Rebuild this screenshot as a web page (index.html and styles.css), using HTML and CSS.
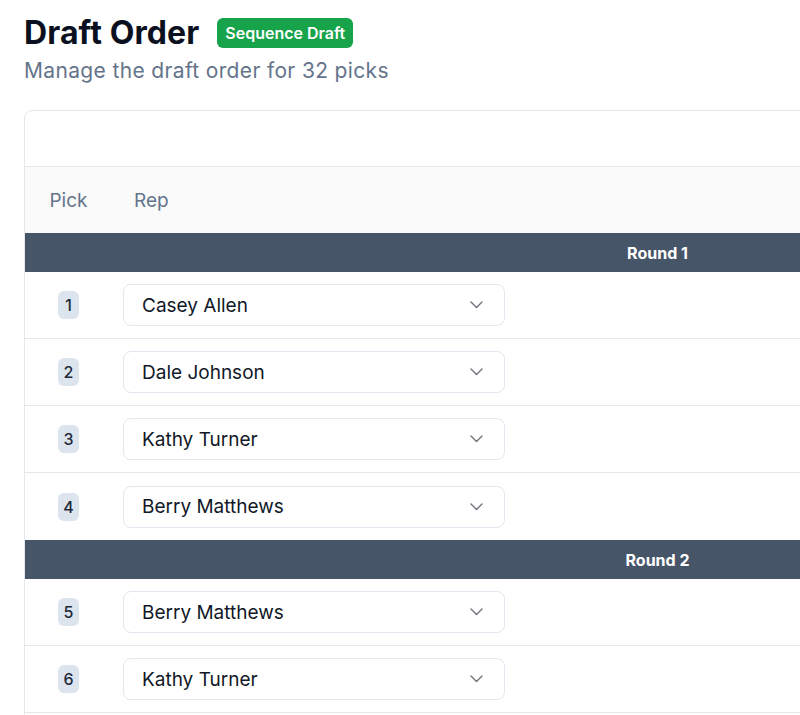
FILE: index.html
```html
<!DOCTYPE html>
<html lang="en">
<head>
<meta charset="utf-8">
<title>Draft Order</title>
<link rel="stylesheet" href="styles.css">
</head>
<body>
<div class="page">
  <header class="head">
    <div class="title-row">
      <h1 class="title">Draft Order</h1>
      <span class="badge">Sequence Draft</span>
    </div>
    <p class="subtitle">Manage the draft order for 32 picks</p>
  </header>

  <section class="card">
    <div class="toolbar"></div>
    <div class="thead">
      <div class="col-pick">Pick</div>
      <div class="col-rep">Rep</div>
    </div>

    <div class="round">Round 1</div>
    <div class="row">
      <div class="pick"><span class="num">1</span></div>
      <div class="rep"><div class="select"><span>Casey Allen</span><svg class="chev" width="13" height="8" viewBox="0 0 13 8"><path d="M1 1l5.5 5.5L12 1" fill="none" stroke="#71717a" stroke-width="1.4" stroke-linecap="round" stroke-linejoin="round"/></svg></div></div>
    </div>
    <div class="row">
      <div class="pick"><span class="num">2</span></div>
      <div class="rep"><div class="select"><span>Dale Johnson</span><svg class="chev" width="13" height="8" viewBox="0 0 13 8"><path d="M1 1l5.5 5.5L12 1" fill="none" stroke="#71717a" stroke-width="1.4" stroke-linecap="round" stroke-linejoin="round"/></svg></div></div>
    </div>
    <div class="row">
      <div class="pick"><span class="num">3</span></div>
      <div class="rep"><div class="select"><span>Kathy Turner</span><svg class="chev" width="13" height="8" viewBox="0 0 13 8"><path d="M1 1l5.5 5.5L12 1" fill="none" stroke="#71717a" stroke-width="1.4" stroke-linecap="round" stroke-linejoin="round"/></svg></div></div>
    </div>
    <div class="row last">
      <div class="pick"><span class="num">4</span></div>
      <div class="rep"><div class="select"><span>Berry Matthews</span><svg class="chev" width="13" height="8" viewBox="0 0 13 8"><path d="M1 1l5.5 5.5L12 1" fill="none" stroke="#71717a" stroke-width="1.4" stroke-linecap="round" stroke-linejoin="round"/></svg></div></div>
    </div>

    <div class="round">Round 2</div>
    <div class="row">
      <div class="pick"><span class="num">5</span></div>
      <div class="rep"><div class="select"><span>Berry Matthews</span><svg class="chev" width="13" height="8" viewBox="0 0 13 8"><path d="M1 1l5.5 5.5L12 1" fill="none" stroke="#71717a" stroke-width="1.4" stroke-linecap="round" stroke-linejoin="round"/></svg></div></div>
    </div>
    <div class="row">
      <div class="pick"><span class="num">6</span></div>
      <div class="rep"><div class="select"><span>Kathy Turner</span><svg class="chev" width="13" height="8" viewBox="0 0 13 8"><path d="M1 1l5.5 5.5L12 1" fill="none" stroke="#71717a" stroke-width="1.4" stroke-linecap="round" stroke-linejoin="round"/></svg></div></div>
    </div>
    <div class="row">
      <div class="pick"><span class="num">7</span></div>
      <div class="rep"><div class="select"><span>Dale Johnson</span><svg class="chev" width="13" height="8" viewBox="0 0 13 8"><path d="M1 1l5.5 5.5L12 1" fill="none" stroke="#71717a" stroke-width="1.4" stroke-linecap="round" stroke-linejoin="round"/></svg></div></div>
    </div>
  </section>
</div>
</body>
</html>
```

FILE: styles.css
```css
html, body {
  margin: 0;
  padding: 0;
  overflow: hidden;
  background: #ffffff;
}

body {
  font-family: Inter, "Noto Sans", "Liberation Sans", sans-serif;
  color: #111827;
}

.page {
  padding: 13px 0 0 24px;
  width: 1267px;
}

.title-row {
  display: flex;
  align-items: center;
  gap: 18px;
}

.title {
  margin: 0;
  font-size: 32px;
  line-height: 40px;
  font-weight: 700;
  color: #0b1020;
  letter-spacing: 0.1px;
}

.badge {
  display: inline-flex;
  align-items: center;
  height: 30px;
  padding: 0 8px;
  border-radius: 6px;
  background: #16a34a;
  color: #ffffff;
  font-size: 16px;
  font-weight: 600;
  margin-top: 0;
}

.subtitle {
  margin: 4px 0 0 0;
  font-size: 21px;
  line-height: 28px;
  letter-spacing: 0.35px;
  color: #64748b;
}

.card {
  margin-top: 25px;
  border: 1px solid #e5e7eb;
  border-radius: 8px;
  overflow: hidden;
}

.toolbar {
  height: 55px;
  border-bottom: 1px solid #e5e7eb;
}

.thead {
  display: flex;
  align-items: center;
  height: 66px;
  background: #fafafa;
  color: #64748b;
  font-size: 19px;
}

.col-pick {
  width: 87px;
  text-align: center;
}

.col-rep {
  padding-left: 22px;
}

.round {
  height: 39px;
  background: #475569;
  color: #ffffff;
  font-size: 16px;
  font-weight: 700;
  display: flex;
  align-items: center;
  justify-content: center;
}

.row {
  display: flex;
  align-items: center;
  height: 66px;
  border-bottom: 1px solid #e5e7eb;
}

.row.last {
  border-bottom: none;
  height: 67px;
}

.pick {
  width: 87px;
  display: flex;
  justify-content: center;
}

.num {
  display: inline-flex;
  align-items: center;
  justify-content: center;
  min-width: 21px;
  height: 28px;
  border-radius: 6px;
  background: #dce4ee;
  color: #1e293b;
  font-size: 16px;
  font-weight: 500;
}

.rep {
  padding-left: 11px;
}

.select {
  width: 382px;
  height: 42px;
  box-sizing: border-box;
  border: 1px solid #e2e8f0;
  border-radius: 8px;
  display: flex;
  align-items: center;
  justify-content: space-between;
  padding: 0 21px 0 18px;
  font-size: 19px;
  color: #111827;
  background: #ffffff;
}

.chev {
  display: block;
}
```
